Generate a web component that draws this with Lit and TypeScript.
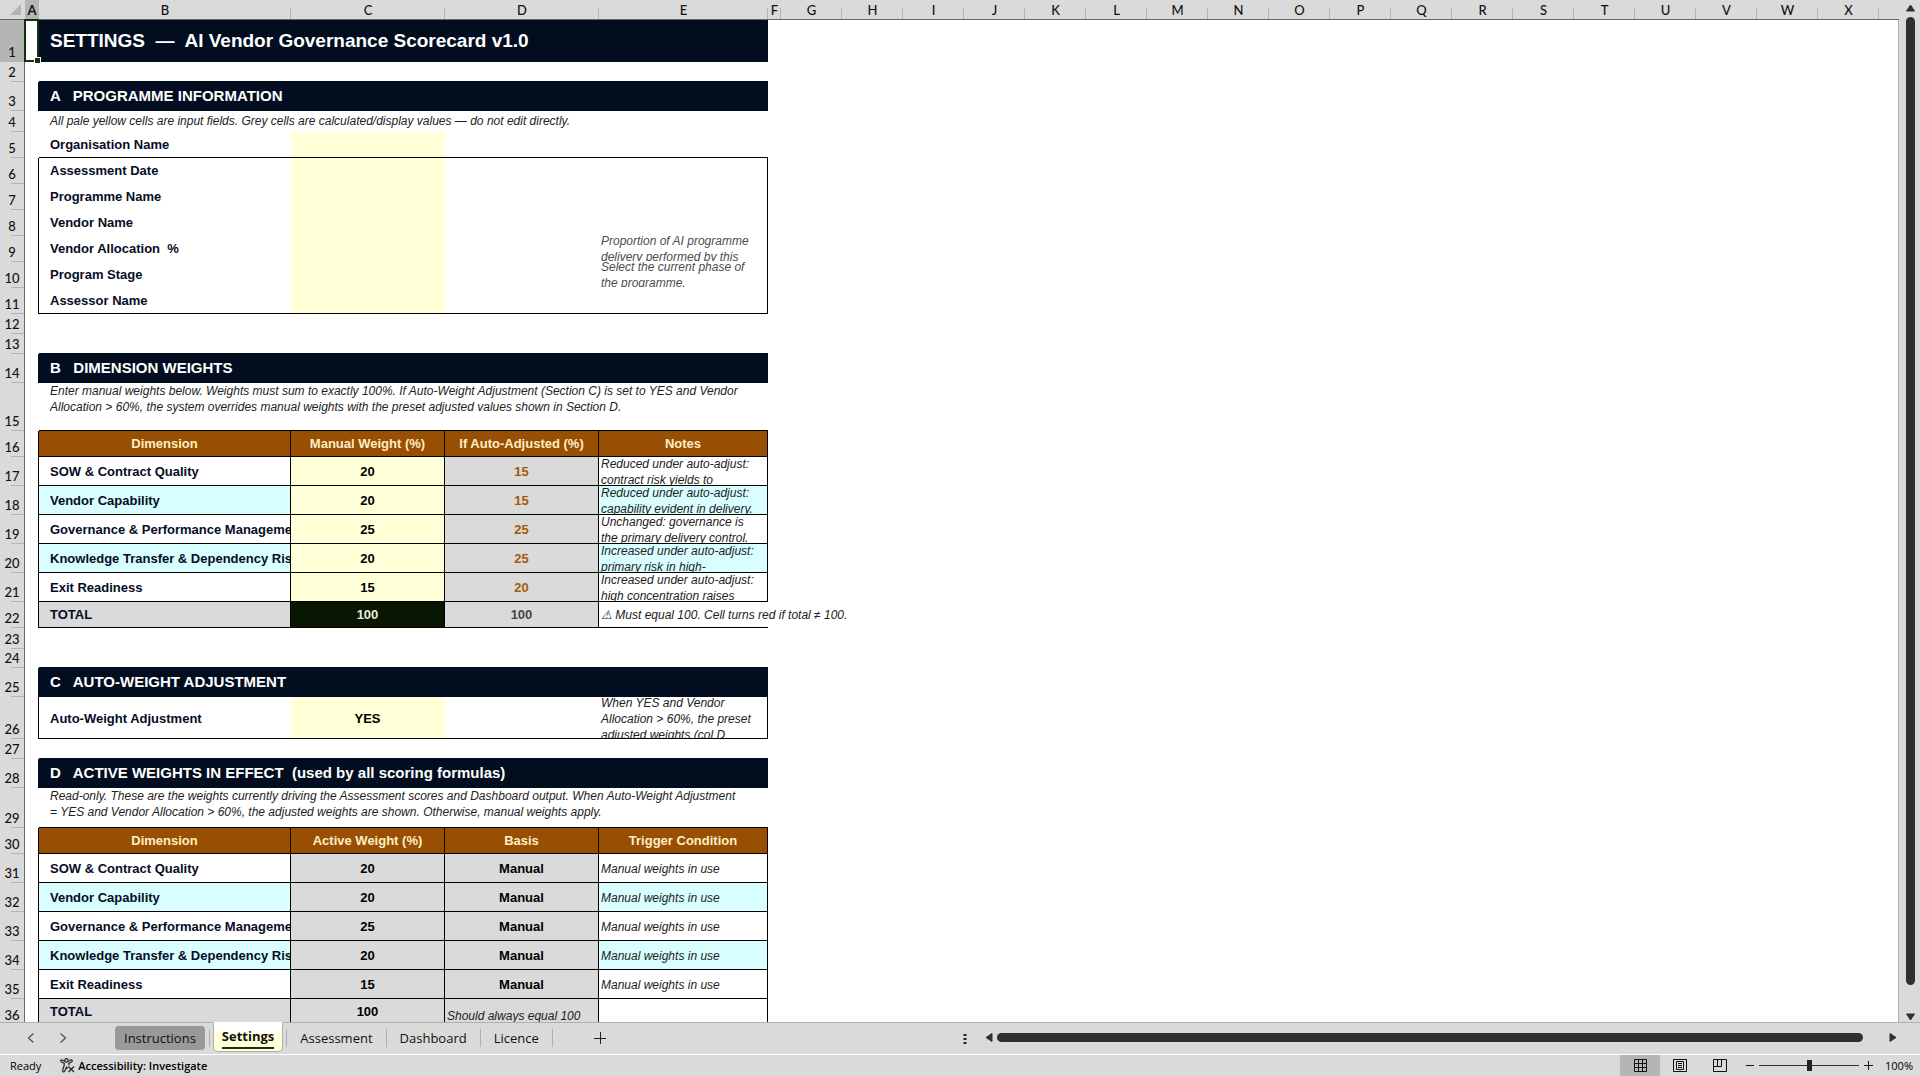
import { LitElement, html, css, svg, nothing } from "lit";
import { customElement, state } from "lit/decorators.js";
import { classMap } from "lit/directives/class-map.js";

interface Cell {
  text?: string;
  kind: string;
  span?: number;
}

interface Row {
  height: number;
  cells: Cell[];
}

const blank = (kind = ""): Cell => ({ kind });
const cell = (kind: string, text = "", span = 1): Cell => ({ kind, text, span });

const empty = (height = 20, kind = ""): Row => ({ height, cells: [cell(kind, "", 4)] });
const banner = (text: string, height = 29): Row => ({
  height,
  cells: [cell("banner", text, 4)],
});
const note = (text: string, height: number, extra = ""): Row => ({
  height,
  cells: [cell(`note lead ${extra}`, text, 4)],
});
const field = (label: string, hint = "", edge = ""): Row => ({
  height: 26,
  cells: [
    cell(`label ${edge}`, label),
    blank(`yellow ${edge}`),
    blank(edge),
    cell(`note faint ${edge || "right"}`, hint),
  ],
});
const heads = (...names: string[]): Row => ({
  height: 26,
  cells: names.map((n) => cell("head right bottom", n)),
});
const weight = (
  name: string,
  first: string,
  second: string,
  remark: string,
  tint: boolean,
  kinds: [string, string]
): Row => ({
  height: 29,
  cells: [
    cell(`label tall right bottom ${tint ? "cyan" : ""}`, name),
    cell(`value tall right bottom ${kinds[0]}`, first),
    cell(`value tall right bottom ${kinds[1]}`, second),
    cell(`note tall right bottom ${tint ? "cyan" : ""}`, remark),
  ],
});

const names = [
  "SOW & Contract Quality",
  "Vendor Capability",
  "Governance & Performance Management",
  "Knowledge Transfer & Dependency Risk",
  "Exit Readiness",
];
const manual = ["20", "20", "25", "20", "15"];
const adjusted = ["15", "15", "25", "25", "20"];
const remarks = [
  "Reduced under auto-adjust: contract risk yields to",
  "Reduced under auto-adjust: capability evident in delivery.",
  "Unchanged: governance is the primary delivery control.",
  "Increased under auto-adjust: primary risk in high-",
  "Increased under auto-adjust: high concentration raises",
];

const ROWS: Row[] = [
  { height: 42, cells: [cell("banner title", "SETTINGS  —  AI Vendor Governance Scorecard v1.0", 4)] },
  empty(20, "before"),
  banner("A   PROGRAMME INFORMATION"),
  note("All pale yellow cells are input fields. Grey cells are calculated/display values — do not edit directly.", 21),
  field("Organisation Name", "", "bottom"),
  field("Assessment Date"),
  field("Programme Name"),
  field("Vendor Name"),
  field("Vendor Allocation  %", "Proportion of AI programme delivery performed by this"),
  field("Program Stage", "Select the current phase of the programme."),
  {
    height: 26,
    cells: [
      cell("label bottom", "Assessor Name"),
      blank("yellow bottom"),
      blank("bottom"),
      blank("right bottom"),
    ],
  },
  empty(),
  empty(20, "before"),
  banner("B   DIMENSION WEIGHTS"),
  note(
    "Enter manual weights below. Weights must sum to exactly 100%. If Auto-Weight Adjustment (Section C) is set to YES and Vendor Allocation > 60%, the system overrides manual weights with the preset adjusted values shown in Section D.",
    48,
    "top bottom"
  ),
  heads("Dimension", "Manual Weight (%)", "If Auto-Adjusted (%)", "Notes"),
  ...names.map((n, i) => weight(n, manual[i], adjusted[i], remarks[i], i % 2 === 1, ["yellow", "grey amber"])),
  {
    height: 26,
    cells: [
      cell("label grey right bottom", "TOTAL"),
      cell("value right bottom sum", "100"),
      cell("value grey right bottom muted", "100"),
      cell("note bottom spill", "⚠\uFE0E Must equal 100. Cell turns red if total ≠ 100."),
    ],
  },
  empty(21),
  empty(19, "before"),
  banner("C   AUTO-WEIGHT ADJUSTMENT"),
  {
    height: 42,
    cells: [
      cell("label tall bottom", "Auto-Weight Adjustment"),
      cell("value tall yellow bottom", "YES"),
      blank("bottom"),
      cell("note tall right bottom", "When YES and Vendor Allocation > 60%, the preset adjusted weights (col D"),
    ],
  },
  empty(20, "before"),
  banner("D   ACTIVE WEIGHTS IN EFFECT  (used by all scoring formulas)"),
  note(
    "Read-only. These are the weights currently driving the Assessment scores and Dashboard output. When Auto-Weight Adjustment = YES and Vendor Allocation > 60%, the adjusted weights are shown. Otherwise, manual weights apply.",
    40,
    "top bottom"
  ),
  heads("Dimension", "Active Weight (%)", "Basis", "Trigger Condition"),
  ...names.map((n, i) => weight(n, manual[i], "Manual", "Manual weights in use", i % 2 === 1, ["grey", "grey"])),
  {
    height: 26,
    cells: [
      cell("label grey right bottom", "TOTAL"),
      cell("value grey right bottom", "100"),
      cell("note grey right bottom low", "Should always equal 100"),
      blank("right bottom"),
    ],
  },
];

/* Rows whose table frame starts at the right edge of column A. */
const FRAMED = new Set([6, 7, 8, 9, 10, 11, 16, 17, 18, 19, 20, 21, 22, 26, 30, 31, 32, 33, 34, 35, 36]);
const BANNERS = new Set([1, 3, 14, 25, 28]);
const LETTERS = "ABCDEFGHIJKLMNOPQRSTUVWX".split("");
const WIDTHS = [14, 252, 154, 154, 169, 13];
const TABS = ["Instructions", "Settings", "Assessment", "Dashboard", "Licence"];

@customElement("app-root")
export class AppRoot extends LitElement {
  @state() private active = "Settings";

  static styles = css`
    :host {
      display: block;
      font-family: "Liberation Sans", Arial, sans-serif;
      color: #111;
    }
    * {
      box-sizing: border-box;
    }
    button {
      font: inherit;
      color: inherit;
      border: 0;
      padding: 0;
      background: none;
    }
    svg {
      display: block;
    }
    .shell {
      display: flex;
      flex-direction: column;
      height: 100vh;
      background: #dadada;
    }
    .work {
      flex: 1;
      min-height: 0;
      display: flex;
    }
    .sheet {
      flex: 1;
      min-width: 0;
      overflow: hidden;
    }
    table {
      width: 100%;
      table-layout: fixed;
      border-collapse: separate;
      border-spacing: 0;
    }
    th,
    td {
      padding: 0;
      font-weight: normal;
    }
    .letter {
      height: 20px;
      border-bottom: 1px solid #666;
      background: linear-gradient(#b4b4b4, #b4b4b4) right bottom / 1px 11px no-repeat #dadada;
      font: 500 13px/17px Lato, sans-serif;
      padding-top: 2px;
      text-align: center;
      overflow: hidden;
    }
    .letter.on {
      background-color: #b5b5b5;
      font-weight: 700;
    }
    .corner {
      border-bottom: 1px solid #666;
    }
    .corner button {
      display: block;
      margin: 0 0 0 9px;
    }
    .number {
      height: var(--h);
      border-right: 1px solid #666;
      background: linear-gradient(#b4b4b4, #b4b4b4) right bottom / 13px 1px no-repeat #dadada;
      font: 500 13px/16px Lato, sans-serif;
      text-align: center;
      vertical-align: bottom;
      padding-bottom: 2px;
    }
    .number.on {
      background-color: #b5b5b5;
    }
    td {
      --r: transparent;
      --b: transparent;
      height: var(--h);
      background-color: #fff;
      box-shadow: inset -1px 0 var(--r), inset 0 -1px var(--b);
    }
    .right {
      --r: #000;
    }
    .bottom {
      --b: #000;
    }
    .before {
      --b: #020e20;
    }
    .navy {
      --r: #020e20;
    }
    .outer {
      --r: #b0b0b0;
    }
    .clip {
      height: calc(var(--h) - 1px);
      margin: 0 1px 1px 0;
      display: flex;
      align-items: center;
      overflow: hidden;
    }
    .banner {
      background-color: #020e20;
      color: #fff;
      font-weight: 700;
      font-size: 15px;
      line-height: 20px;
      white-space: pre;
    }
    .title {
      font-size: 19px;
      line-height: 24px;
    }
    .banner .clip,
    .label .clip {
      padding-left: 11px;
    }
    .label {
      color: #050d25;
      font-weight: 700;
      font-size: 13px;
      line-height: 16px;
      white-space: pre;
    }
    .value,
    .head {
      color: #000;
      font-weight: 700;
      font-size: 13px;
      line-height: 16px;
    }
    .value .clip,
    .head .clip {
      justify-content: center;
    }
    .head {
      background-color: #984f04;
      color: #ffeec4;
    }
    .note {
      color: #222;
      font-style: italic;
      font-size: 12px;
      line-height: 16px;
    }
    .note .clip {
      padding-left: 2px;
      padding-right: 8px;
    }
    .lead .clip {
      padding-left: 11px;
      padding-right: 26px;
    }
    .faint {
      color: #4c4c4c;
    }
    .tall .clip {
      padding-top: 2px;
    }
    .top .clip {
      align-items: flex-start;
    }
    .low .clip {
      align-items: flex-end;
    }
    .spill {
      position: relative;
      z-index: 1;
    }
    .spill .clip {
      overflow: visible;
      white-space: nowrap;
    }
    .yellow {
      background-color: #ffffd8;
    }
    .grey {
      background-color: #dadada;
    }
    .cyan {
      background-color: #d8feff;
    }
    .amber {
      color: #a45a08;
    }
    .muted {
      color: #444;
    }
    .sum {
      background-color: #081602;
      color: #e8ecd8;
    }
    .picked {
      position: relative;
    }
    .cursor {
      position: absolute;
      inset: -1px 0 0 -1px;
      border: 2px solid #143010;
      z-index: 2;
    }
    .cursor::after {
      content: "";
      position: absolute;
      right: -3px;
      bottom: -3px;
      width: 5px;
      height: 5px;
      background: #143010;
      outline: 1px solid #fff;
    }

    .vbar {
      width: 21px;
      padding: 4px 5px 1px 6px;
      display: flex;
      flex-direction: column;
      align-items: center;
    }
    .vtrack {
      flex: 1;
      width: 9px;
      margin: 5px 0 28px;
      border-radius: 5px;
      background: #303030;
    }

    .strip {
      display: flex;
      height: 33px;
      border-top: 1px solid #b0b0b0;
      border-bottom: 1px solid #fff;
    }
    .tabs {
      width: 50%;
      display: flex;
      align-items: flex-start;
      font: 13px/22px "Open Sans", sans-serif;
    }
    .step {
      height: 30px;
      width: 32px;
      display: grid;
      place-items: center;
    }
    .steps {
      display: flex;
      width: 115px;
      padding-left: 15px;
    }
    .tab {
      height: 30px;
      padding: 0 13px 1px;
      position: relative;
    }
    .rule {
      width: 1px;
      height: 18px;
      margin-top: 6px;
      background: #b0b0b0;
    }
    .filled {
      height: 24px;
      margin: 3px 4px 0 0;
      padding: 0 9px 1px;
      border-radius: 4px;
      background: #999;
    }
    .current {
      height: 30px;
      margin: -1px 3px 0;
      padding: 2px 8px 0;
      font-weight: 700;
      border: 1px solid #b0b0b0;
      border-top: 0;
      border-radius: 0 0 5px 5px;
      background: linear-gradient(#fff 9px, #ffffd8 12px);
      line-height: 18px;
    }
    .current .name {
      display: block;
      height: 22px;
      border-bottom: 2px solid #143010;
    }
    .add {
      height: 30px;
      width: 40px;
      margin-left: 27px;
      display: grid;
      place-items: center;
    }
    .hbar {
      flex: 1;
      display: flex;
      align-items: center;
      padding: 0 23px 3px 3px;
    }
    .grip {
      width: 4px;
      margin: 4px 18px 0 0;
    }
    .htrack {
      flex: 1;
      height: 9px;
      margin: 0 26px 0 4px;
      border-radius: 5px;
      background: #303030;
    }

    .status {
      height: 21px;
      display: flex;
      align-items: center;
      color: #000;
      font: 11px/20px "Open Sans", sans-serif;
      padding: 0 7px 0 10px;
    }
    .access {
      display: flex;
      align-items: center;
      gap: 3px;
      margin-left: 19px;
      font-weight: 600;
    }
    .space {
      flex: 1;
    }
    .view {
      width: 40px;
      height: 21px;
      display: grid;
      place-items: center;
    }
    .view.on {
      background: #b5b5b5;
    }
    .zoom {
      display: flex;
      align-items: center;
      gap: 5px;
      margin-left: 6px;
    }
    input {
      appearance: none;
      width: 100px;
      height: 20px;
      margin: 0;
      background: linear-gradient(#303030, #303030) center / 100% 1px no-repeat;
    }
    input::-webkit-slider-thumb {
      appearance: none;
      width: 5px;
      height: 11px;
      background: #222;
    }
    .percent {
      margin-left: 12px;
    }
  `;

  private arrow(points: string, w: number, h: number, label: string) {
    return html`<button aria-label=${label}>
      <svg width=${w} height=${h} viewBox="0 0 ${w} ${h}">
        ${svg`<polygon points=${points} fill="#303030" stroke="#303030" stroke-linejoin="round"></polygon>`}
      </svg>
    </button>`;
  }

  private renderRow(row: Row, n: number) {
    const edge = BANNERS.has(n) ? "navy" : FRAMED.has(n) ? "right" : "";
    return html`<tr style="--h:${row.height}px">
      <th scope="row" class=${classMap({ number: true, on: n === 1 })}>${n}</th>
      <td class="${n === 1 ? "picked" : ""} ${edge}">${n === 1 ? html`<div class="cursor"></div>` : nothing}</td>
      ${row.cells.map(
        (c) => html`<td class=${c.kind} colspan=${c.span ?? 1}><div class="clip"><span>${c.text ?? ""}</span></div></td>`
      )}
      <td class="outer" colspan="20"></td>
    </tr>`;
  }

  private renderTab(name: string) {
    const current = name === this.active;
    return html`<button
        class=${classMap({ tab: true, current, filled: name === "Instructions" && !current })}
        role="tab"
        aria-selected=${current}
        @click=${() => (this.active = name)}
      >
        <span class="name">${name}</span>
      </button>
      <span class="rule"></span>`;
  }

  render() {
    return html`<div class="shell">
      <div class="work">
        <div class="sheet">
          <table>
            <colgroup>
              <col style="width:25px" />
              ${LETTERS.map((_, i) => html`<col style="width:${WIDTHS[i] ?? 61}px" />`)}
              <col />
            </colgroup>
            <thead>
              <tr>
                <th class="corner">
                  <button aria-label="Select all">
                    <svg width="12" height="12" viewBox="0 0 12 12"><path d="M12 0V11H1Z" fill="#b4b4b4" /></svg>
                  </button>
                </th>
                ${LETTERS.map(
                  (l) => html`<th scope="col" class=${classMap({ letter: true, on: l === "A" })}>${l}</th>`
                )}
                <th class="corner"></th>
              </tr>
            </thead>
            <tbody>
              ${ROWS.map((r, i) => this.renderRow(r, i + 1))}
            </tbody>
          </table>
        </div>
        <div class="vbar">
          ${this.arrow("4.5,1 8.5,7 0.5,7", 9, 8, "Scroll up")}
          <div class="vtrack"></div>
          ${this.arrow("0.5,1 8.5,1 4.5,7", 9, 8, "Scroll down")}
        </div>
      </div>

      <div class="strip">
        <div class="tabs" role="tablist">
          <div class="steps">
            <button class="step" aria-label="Previous sheet">
              <svg width="8" height="10" viewBox="0 0 8 10"><path d="M6.5 .5 1.5 5l5 4.5" fill="none" stroke="#555" stroke-width="1.3" /></svg>
            </button>
            <button class="step" aria-label="Next sheet">
              <svg width="8" height="10" viewBox="0 0 8 10"><path d="M1.5 .5 6.5 5l-5 4.5" fill="none" stroke="#555" stroke-width="1.3" /></svg>
            </button>
          </div>
          ${TABS.map((t) => this.renderTab(t))}
          <button class="add" aria-label="New sheet">
            <svg width="12" height="12" viewBox="0 0 12 12"><path d="M0 6.5H12M6.5 0V12" stroke="#222" /></svg>
          </button>
        </div>
        <div class="hbar">
          <svg class="grip" width="3" height="10" viewBox="0 0 3 10"><path d="M0 0H3V2H0ZM0 4H3V6H0ZM0 8H3V10H0Z" fill="#222" /></svg>
          ${this.arrow("1,4.5 7,0.5 7,8.5", 8, 9, "Scroll left")}
          <div class="htrack"></div>
          ${this.arrow("1,0.5 1,8.5 7,4.5", 8, 9, "Scroll right")}
        </div>
      </div>

      <div class="status">
        <span>Ready</span>
        <button class="access">
          <svg width="15" height="15" viewBox="0 0 15 15" fill="none" stroke="#222" stroke-width="1.2">
            <circle cx="6.5" cy="2.4" r="1.7" />
            <path d="M4.8 3.2 2.2 2C.6 1.6.2 3.4 1.5 4L4.3 5.4 4 8 2.6 12.4C2.4 14 4 14.4 4.6 13.2L6.5 9.2 7.6 10.5M8.2 3.2 10.8 2C12.4 1.6 12.8 3.4 11.5 4L8.8 5.4 9 7.4" />
            <path d="M8.5 8.5 14 14M14 8.5 8.5 14" />
          </svg>
          Accessibility: Investigate
        </button>
        <span class="space"></span>
        <button class="view on" aria-label="Normal">
          <svg width="13" height="13" viewBox="0 0 13 13" fill="none" stroke="#111">
            <path d="M.5 .5H12.5V12.5H.5ZM.5 4.5H12.5M.5 8.5H12.5M4.5 .5V12.5M8.5 .5V12.5" />
          </svg>
        </button>
        <button class="view" aria-label="Page layout">
          <svg width="14" height="13" viewBox="0 0 14 13" fill="none" stroke="#111">
            <path d="M.5 .5H13.5V12.5H.5ZM3.5 2.5H10.5V10.5H3.5ZM5 4.5H9M5 6.5H9M5 8.5H9" />
          </svg>
        </button>
        <button class="view" aria-label="Page break preview">
          <svg width="14" height="13" viewBox="0 0 14 13" fill="none" stroke="#111">
            <path d="M.5 .5H13.5V12.5H.5ZM.5 7.5H8.5V.5M4.5 .5V7.5" />
          </svg>
        </button>
        <div class="zoom">
          <button aria-label="Zoom out">
            <svg width="8" height="9" viewBox="0 0 8 9"><path d="M0 4.5H8" stroke="#111" /></svg>
          </button>
          <input type="range" min="0" max="200" value="100" aria-label="Zoom" />
          <button aria-label="Zoom in">
            <svg width="9" height="9" viewBox="0 0 9 9"><path d="M0 4.5H9M4.5 0V9" stroke="#111" /></svg>
          </button>
        </div>
        <span class="percent">100%</span>
      </div>
    </div>`;
  }
}
